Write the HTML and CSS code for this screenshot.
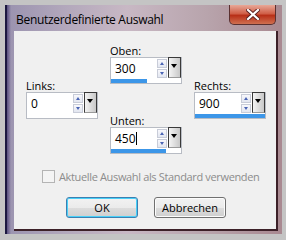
FILE: index.html
```html
<html>
<head>
    <meta charset="UTF-8">
    <title>Benutzerdefinierte Auswahl</title>
    <link rel="stylesheet" href="styles.css">
</head>
<body>
    <div class="window">
        <div class="titlebar">
            <span class="title">Benutzerdefinierte Auswahl</span>
            <div class="close">
                <svg width="14" height="11" viewBox="0 0 14 11">
                    <path d="M2 1 L12 10 M12 1 L2 10" stroke="#5a2020" stroke-width="4" stroke-linecap="square"/>
                    <path d="M2 1 L12 10 M12 1 L2 10" stroke="#ffffff" stroke-width="2.2" stroke-linecap="square"/>
                </svg>
            </div>
        </div>
        <div class="client">
            <div class="fields">
                <div class="col">
                    <div class="field">
                        <label>Links:</label>
                        <div class="box">
                            <div class="row">
                                <span class="value">0</span>
                                <div class="spin"><span class="up"></span><span class="down"></span></div>
                                <div class="drop"></div>
                            </div>
                            <div class="bar"><div class="fill" style="width:0%"></div></div>
                        </div>
                    </div>
                </div>
                <div class="col middle">
                    <div class="field">
                        <label>Oben:</label>
                        <div class="box">
                            <div class="row">
                                <span class="value">300</span>
                                <div class="spin"><span class="up"></span><span class="down"></span></div>
                                <div class="drop"></div>
                            </div>
                            <div class="bar"><div class="fill" style="width:51%"></div></div>
                        </div>
                    </div>
                    <div class="field">
                        <label>Unten:</label>
                        <div class="box">
                            <div class="row">
                                <span class="value">450<i class="caret"></i></span>
                                <div class="spin"><span class="up"></span><span class="down"></span></div>
                                <div class="drop"></div>
                            </div>
                            <div class="bar"><div class="fill" style="width:78%"></div></div>
                        </div>
                    </div>
                </div>
                <div class="col">
                    <div class="field">
                        <label>Rechts:</label>
                        <div class="box">
                            <div class="row">
                                <span class="value">900</span>
                                <div class="spin"><span class="up"></span><span class="down"></span></div>
                                <div class="drop"></div>
                            </div>
                            <div class="bar"><div class="fill" style="width:100%"></div></div>
                        </div>
                    </div>
                </div>
            </div>

            <div class="check">
                <span class="checkbox"></span>
                <span>Aktuelle Auswahl als Standard verwenden</span>
            </div>

            <div class="buttons">
                <button class="default">OK</button>
                <button>Abbrechen</button>
            </div>
        </div>
    </div>
</body>
</html>
```

FILE: styles.css
```css
body {
    margin: 0;
    padding: 5px 4px 6px 5px;
    background-color: #c4c4c4;
    font-family: "Open Sans", "Noto Sans", sans-serif;
    font-size: 11px;
    color: #000;
}

.window {
    width: 277px;
    height: 229px;
    display: flex;
    flex-direction: column;
    background: linear-gradient(90deg, #5a5080 0px, #9c94b0 4px, #b3a8bc 60px, #c8b8c4 120px, #b8a4ac 200px, #a88890 277px);
    border-left: 2px solid #1c1840;
    box-sizing: border-box;
}

.titlebar {
    height: 26px;
    display: flex;
    justify-content: space-between;
    align-items: flex-start;
    padding-left: 9px;
}

.title {
    margin-top: 8px;
    font-size: 12px;
    line-height: 14px;
    letter-spacing: -0.3px;
}

.close {
    width: 47px;
    height: 20px;
    margin-right: 6px;
    box-sizing: border-box;
    border: 1px solid #5a3030;
    border-top: none;
    border-radius: 0 0 5px 5px;
    background: linear-gradient(#e8a898, #d06048 45%, #b83018 55%, #d07050);
    display: flex;
    justify-content: center;
    align-items: center;
}

.client {
    flex: 1;
    margin: 0 4px 3px 7px;
    background-color: #f0f0f0;
    border-right: 2px solid #3c2028;
    border-bottom: 2px solid #3c2028;
    display: flex;
    flex-direction: column;
}

.fields {
    display: flex;
    align-items: center;
    gap: 12px;
    padding: 13px 0 0 12px;
}

.col {
    display: flex;
    flex-direction: column;
    gap: 30px;
}

.field label {
    display: block;
    height: 13px;
    line-height: 13px;
}

.box {
    width: 72px;
    height: 27px;
    box-sizing: border-box;
    border: 1px solid #b8bcc4;
    background-color: #fff;
    display: flex;
    flex-direction: column;
}

.row {
    display: flex;
    height: 21px;
}

.value {
    flex: 1;
    padding: 4px 0 0 4px;
    font-size: 12px;
    line-height: 14px;
}

.caret {
    display: inline-block;
    width: 1px;
    height: 13px;
    background-color: #000;
    vertical-align: -2px;
}

.spin {
    width: 10px;
    display: flex;
    flex-direction: column;
    gap: 1px;
    padding-top: 1px;
    margin-right: 1px;
}

.spin span {
    height: 9px;
    border: 1px solid #c8ccd8;
    background: linear-gradient(#f8f8fc, #e2e6f0);
    box-sizing: border-box;
    position: relative;
}

.spin .up::after,
.spin .down::after {
    content: "";
    position: absolute;
    left: 2px;
    top: 2px;
    border-left: 2px solid transparent;
    border-right: 2px solid transparent;
}

.spin .up::after {
    border-bottom: 3px solid #4a64b4;
}

.spin .down::after {
    border-top: 3px solid #4a64b4;
}

.drop {
    width: 13px;
    height: 21px;
    box-sizing: border-box;
    border: 1px solid #3a3a3a;
    border-bottom-color: #9a9a9a;
    background: linear-gradient(90deg, #f4f4f4, #c8c8c8);
    margin-top: -1px;
    position: relative;
}

.drop::after {
    content: "";
    position: absolute;
    left: 2px;
    top: 6px;
    border-left: 3px solid transparent;
    border-right: 3px solid transparent;
    border-top: 4px solid #000;
}

.bar {
    height: 4px;
}

.fill {
    height: 4px;
    background-color: #3c96e8;
}

.check {
    display: flex;
    align-items: center;
    gap: 4px;
    margin: 15px 0 0 28px;
    color: #8c8c8c;
    font-size: 11px;
    letter-spacing: -0.35px;
}

.checkbox {
    width: 11px;
    height: 11px;
    border: 1px solid #b4b4b4;
    background-color: #f4f4f4;
}

.buttons {
    display: flex;
    gap: 16px;
    margin: 13px 0 0 52px;
}

button {
    width: 72px;
    height: 21px;
    padding: 0;
    font-family: "Open Sans", "Noto Sans", sans-serif;
    font-size: 11px;
    color: #000;
    border: 1px solid #707070;
    border-radius: 3px;
    background: linear-gradient(#f2f2f2 0%, #ebebeb 50%, #dddddd 51%, #cfcfcf 100%);
    box-shadow: inset 0 0 0 1px #fcfcfc;
}

button.default {
    border-color: #3c7fb1;
    box-shadow: inset 0 0 0 1px #48d0f8;
}
```
